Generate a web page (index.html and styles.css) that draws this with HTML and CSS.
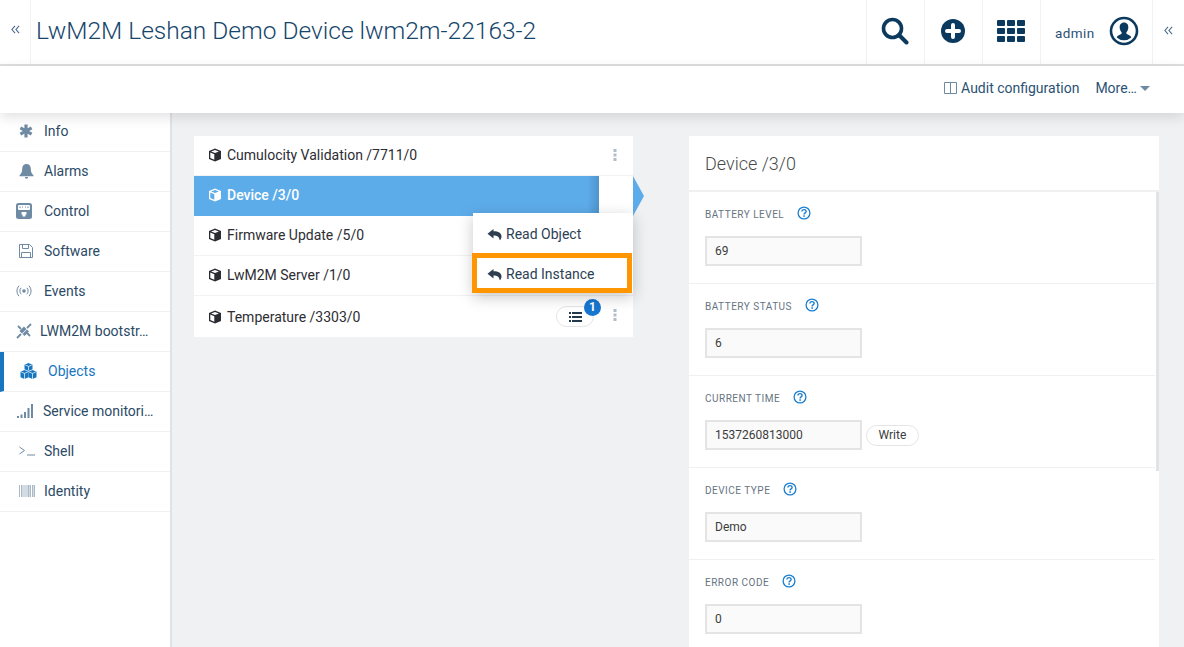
FILE: index.html
```html
<!DOCTYPE html>
<html lang="en">
<head>
    <meta charset="UTF-8">
    <title>LwM2M Leshan Demo Device</title>
    <link rel="stylesheet" href="styles.css">
</head>
<body>

<svg class="defs" width="0" height="0">
    <symbol id="cube" viewBox="0 0 14 14">
        <path d="M7 .6 13 3v8l-6 2.500L1 11V3z" fill="currentColor"/>
        <path d="M7 2 10.900 3.500 7 5.100 3.100 3.500z" fill="var(--cube-cut, #fff)"/>
        <path d="M2.300 4.600 6.300 6.300v5.500l-4-1.700z" fill="var(--cube-cut, #fff)"/>
    </symbol>
    <symbol id="reply" viewBox="0 0 15 13">
        <path d="M6.500 1 .5 5.800l6 4.700V7.400c3.500 0 5.600 1 6.300 4.800.9-.6 1.700-2 1.700-3.800 0-3.300-3-5.100-8-5.100z" fill="currentColor"/>
    </symbol>
    <symbol id="dots" viewBox="0 0 4 14">
        <rect x="0.500" y="1" width="3" height="3" fill="currentColor"/>
        <rect x="0.500" y="5.500" width="3" height="3" fill="currentColor"/>
        <rect x="0.500" y="10" width="3" height="3" fill="currentColor"/>
    </symbol>
    <symbol id="help" viewBox="0 0 14 14">
        <circle cx="7" cy="7" r="5.900" fill="none" stroke="currentColor" stroke-width="1.300"/>
        <path d="M4.900 5.500C5 4.200 5.900 3.600 7 3.600c1.200 0 2.100.7 2.100 1.800 0 1.500-2 1.500-2 3.100" fill="none" stroke="currentColor" stroke-width="1.400"/>
        <rect x="6.300" y="9.300" width="1.600" height="1.500" fill="currentColor"/>
    </symbol>
    <symbol id="chevrons" viewBox="0 0 10 10">
        <path d="M4.500 1 1 5l3.500 4M9 1 5.500 5 9 9" fill="none" stroke="currentColor" stroke-width="1.200"/>
    </symbol>
</svg>

<header class="topbar">
    <a class="toggle toggle-left"><svg class="chevrons"><use href="#chevrons"/></svg></a>
    <h1 class="title">LwM2M Leshan Demo Device lwm2m-22163-2</h1>
    <a class="top-btn">
        <svg width="28" height="28" viewBox="0 0 28 28"><circle cx="11.500" cy="11.500" r="9" fill="none" stroke="#0b3a5e" stroke-width="3.600"/><path d="m18 18 7.500 7.500" stroke="#0b3a5e" stroke-width="4" stroke-linecap="round"/></svg>
    </a>
    <a class="top-btn">
        <svg width="24" height="24" viewBox="0 0 24 24"><circle cx="12" cy="12" r="12" fill="#0b3a5e"/><path d="M12 6v12M6 12h12" stroke="#fff" stroke-width="4" stroke-linecap="round"/></svg>
    </a>
    <a class="top-btn">
        <svg width="28" height="22" viewBox="0 0 28 22" fill="#0b3a5e">
            <rect x="0" width="8" height="6" rx="1"/><rect x="10" width="8" height="6" rx="1"/><rect x="20" width="8" height="6" rx="1"/>
            <rect x="0" y="8" width="8" height="6" rx="1"/><rect x="10" y="8" width="8" height="6" rx="1"/><rect x="20" y="8" width="8" height="6" rx="1"/>
            <rect x="0" y="16" width="8" height="6" rx="1"/><rect x="10" y="16" width="8" height="6" rx="1"/><rect x="20" y="16" width="8" height="6" rx="1"/>
        </svg>
    </a>
    <a class="user">
        <span class="user-name">admin</span>
        <svg width="30" height="30" viewBox="0 0 30 30"><circle cx="15" cy="15" r="13" fill="none" stroke="#0b3a5e" stroke-width="2.600"/><path d="M15 6.500c-3 0-4.600 2.300-4.300 5.300.2 2 1 3.500 1.900 4.500v1.500c-1.500 1-4.300 1.500-4.900 3.700a11 11 0 0 0 14.600 0c-.6-2.200-3.400-2.700-4.900-3.700v-1.500c.9-1 1.700-2.500 1.900-4.500.3-3-1.300-5.300-4.300-5.300z" fill="#0b3a5e"/></svg>
    </a>
    <a class="toggle toggle-right"><svg class="chevrons"><use href="#chevrons"/></svg></a>
</header>

<div class="actionbar">
    <a class="action">
        <svg width="13" height="12" viewBox="0 0 13 12"><path d="M.5.500h12v11H.5zM6.500.5v11" fill="none" stroke="#6f8aa3"/></svg>
        Audit configuration
    </a>
    <a class="action action-more">More…<span class="caret"></span></a>
</div>

<div class="main">
    <nav class="sidebar">
        <a class="nav-item">
            <span class="nav-icon"><svg width="14" height="14" viewBox="0 0 14 14"><path d="M7 .5v13M1.400 3.800l11.200 6.400M12.600 3.800 1.400 10.200" stroke="#6f8aa3" stroke-width="3.200"/></svg></span>Info
        </a>
        <a class="nav-item">
            <span class="nav-icon"><svg width="15" height="16" viewBox="0 0 15 16"><path d="M7.500 1C10 1 11.800 3 11.800 5.800c0 3.500 1 4.800 2.700 6.700v.8H.5v-.8C2.200 10.600 3.200 9.300 3.200 5.800 3.200 3 5 1 7.500 1zM5.800 14h3.400a1.700 1.700 0 0 1-3.400 0z" fill="#6f8aa3"/></svg></span>Alarms
        </a>
        <a class="nav-item">
            <span class="nav-icon nav-icon-wide"><svg width="16" height="16" viewBox="0 0 16 16"><rect width="16" height="16" rx="2.500" fill="#6f8aa3"/><rect x="2" y="2" width="12" height="5" rx="1" fill="#fff"/><path d="M4 3.500v1.500M6.500 3.500v1M9.500 3.500v1M12 3.500v1.500" stroke="#6f8aa3"/><path d="M5.500 9h5v2.500H9.500v2h-3v-2h-1z" fill="#fff"/></svg></span>Control
        </a>
        <a class="nav-item">
            <span class="nav-icon"><svg width="14" height="14" viewBox="0 0 14 14"><path d="M.5.500h10l3 3v10H.5zM3.500.500v4h6v-4M2.500 13.500v-5h9v5" fill="none" stroke="#6f8aa3"/></svg></span>Software
        </a>
        <a class="nav-item">
            <span class="nav-icon nav-icon-wide"><svg width="16" height="12" viewBox="0 0 16 12"><circle cx="8" cy="6" r="1.800" fill="#6f8aa3"/><path d="M5.200 2.800a4.500 4.500 0 0 0 0 6.400M10.800 2.800a4.500 4.500 0 0 1 0 6.400M3 .8a7.500 7.500 0 0 0 0 10.400M13 .8a7.500 7.500 0 0 1 0 10.400" fill="none" stroke="#6f8aa3"/></svg></span>Events
        </a>
        <a class="nav-item nav-tight">
            <span class="nav-icon"><svg width="16" height="16" viewBox="0 0 16 16"><path d="M1 15 5 11M15 1l-4 4M2 3l3 3M11 10l3 3" stroke="#6f8aa3" stroke-width="1.800"/><path d="m3.500 8 4.500-4.500 2.500 2.500L6 10.500zM6.500 11 11 6.500l2 2L8.500 13z" fill="#6f8aa3"/></svg></span>LWM2M bootstr…
        </a>
        <a class="nav-item nav-active">
            <span class="nav-icon"><svg width="17" height="16" viewBox="0 0 17 16" fill="#1776bf"><path d="M8.500 0l4 1.700v4.600l-4 1.700-4-1.700V1.700z"/><path d="M4.500 7l4 1.700v5.600L4.500 16 .5 14.300V8.700z"/><path d="M12.500 7l4 1.700v5.600L12.500 16l-4-1.700V8.700z"/><path d="M5.200 2 8.500 3.400 11.800 2M8.500 3.400v4M1.200 9l3.300 1.400L7.800 9M4.500 10.400V16M9.200 9l3.300 1.400L15.800 9M12.500 10.400V16" fill="none" stroke="#fff" stroke-width=".7"/></svg></span>Objects
        </a>
        <a class="nav-item nav-tight nav-signal">
            <span class="nav-icon"><svg width="16" height="14" viewBox="0 0 16 14" fill="#6f8aa3"><rect x="0" y="12" width="2" height="2"/><rect x="3.500" y="10.500" width="2" height="3.500"/><rect x="7" y="8" width="2" height="6"/><rect x="10.500" y="4" width="2" height="10"/><rect x="14" y="0" width="2" height="14"/></svg></span>Service monitori…
        </a>
        <a class="nav-item">
            <span class="nav-icon"><svg width="16" height="10" viewBox="0 0 16 10"><path d="m.5 1 5 3.500-5 3.500M8 9h8" fill="none" stroke="#6f8aa3"/></svg></span>Shell
        </a>
        <a class="nav-item">
            <span class="nav-icon"><svg width="16" height="12" viewBox="0 0 16 12" fill="#a9b9c7"><rect x="0" width="1" height="12"/><rect x="2" width="1.500" height="12"/><rect x="4.500" width="1" height="12"/><rect x="6.500" width="1" height="12"/><rect x="8.500" width="2" height="12"/><rect x="11" width="1" height="12"/><rect x="13" width="1" height="12"/><rect x="14.500" width="1.500" height="12"/></svg></span>Identity
        </a>
    </nav>

    <section class="content">
        <div class="list-wrap">
            <ul class="instances">
                <li class="instance">
                    <svg class="cube"><use href="#cube"/></svg>
                    <span class="instance-name">Cumulocity Validation /7711/0</span>
                    <svg class="dots"><use href="#dots"/></svg>
                </li>
                <li class="instance instance-active">
                    <div class="instance-fill">
                        <svg class="cube"><use href="#cube"/></svg>
                        <span class="instance-name">Device /3/0</span>
                    </div>
                    <span class="instance-arrow"></span>
                </li>
                <li class="instance">
                    <svg class="cube"><use href="#cube"/></svg>
                    <span class="instance-name">Firmware Update /5/0</span>
                </li>
                <li class="instance">
                    <svg class="cube"><use href="#cube"/></svg>
                    <span class="instance-name">LwM2M Server /1/0</span>
                </li>
                <li class="instance">
                    <svg class="cube"><use href="#cube"/></svg>
                    <span class="instance-name">Temperature /3303/0</span>
                    <span class="ops-btn">
                        <svg width="13" height="10" viewBox="0 0 13 10" fill="#22374a"><rect x="0" y="0" width="2" height="2"/><rect x="3" y="0" width="10" height="2"/><rect x="0" y="4" width="2" height="2"/><rect x="3" y="4" width="10" height="2"/><rect x="0" y="8" width="2" height="2"/><rect x="3" y="8" width="10" height="2"/></svg>
                        <span class="ops-badge">1</span>
                    </span>
                    <svg class="dots"><use href="#dots"/></svg>
                </li>
            </ul>
            <div class="menu">
                <a class="menu-item"><svg class="reply"><use href="#reply"/></svg>Read Object</a>
                <a class="menu-item menu-marked"><svg class="reply"><use href="#reply"/></svg>Read Instance</a>
            </div>
        </div>

        <div class="panel">
            <h2 class="panel-title">Device /3/0</h2>
            <div class="fields">
                <div class="field">
                    <label class="field-label">Battery level <svg class="help"><use href="#help"/></svg></label>
                    <div class="field-row"><span class="field-value">69</span></div>
                </div>
                <div class="field">
                    <label class="field-label">Battery status <svg class="help"><use href="#help"/></svg></label>
                    <div class="field-row"><span class="field-value">6</span></div>
                </div>
                <div class="field">
                    <label class="field-label">Current time <svg class="help"><use href="#help"/></svg></label>
                    <div class="field-row"><span class="field-value">1537260813000</span><a class="write-btn">Write</a></div>
                </div>
                <div class="field">
                    <label class="field-label">Device type <svg class="help"><use href="#help"/></svg></label>
                    <div class="field-row"><span class="field-value">Demo</span></div>
                </div>
                <div class="field">
                    <label class="field-label">Error code <svg class="help"><use href="#help"/></svg></label>
                    <div class="field-row"><span class="field-value">0</span></div>
                </div>
                <span class="scroll-thumb"></span>
            </div>
        </div>
    </section>
</div>

</body>
</html>
```

FILE: styles.css
```css
* {
    box-sizing: border-box;
}

html, body {
    height: 100%;
}

body {
    margin: 0;
    padding: 0;
    height: 647px;
    overflow: hidden;
    display: flex;
    flex-direction: column;
    background: #fff;
    font-family: Roboto, "Liberation Sans", sans-serif;
    font-size: 14px;
    color: #2c4a66;
}

.defs {
    position: absolute;
}

/* top bar */
.topbar {
    display: flex;
    align-items: stretch;
    height: 66px;
    flex: none;
    border-bottom: 2px solid #dfdfdf;
    background: #fff;
}

.toggle {
    display: flex;
    align-items: center;
    justify-content: center;
    color: #47688a;
}

.toggle-left {
    width: 31px;
    padding-bottom: 5px;
    border-right: 1px solid #f2f2f2;
}

.toggle-right {
    width: 31px;
    padding-bottom: 4px;
}

.chevrons {
    width: 9px;
    height: 9px;
}

.title {
    flex: 1;
    margin: 0;
    padding-left: 5px;
    font-size: 24.500px;
    font-weight: 300;
    line-height: 62px;
    color: #15456b;
    white-space: nowrap;
}

.top-btn {
    width: 58px;
    display: flex;
    align-items: center;
    justify-content: center;
    border-left: 1px solid #f2f2f2;
    padding: 0 2px 3px 0;
}

.user {
    width: 113px;
    display: flex;
    align-items: center;
    gap: 14px;
    padding: 0 0 3px 14px;
    border-left: 1px solid #f2f2f2;
    border-right: 1px solid #f2f2f2;
}

.user-name {
    margin-top: 5px;
    font-size: 13.500px;
    letter-spacing: .4px;
    color: #2c5273;
}

/* second bar */
.actionbar {
    position: relative;
    z-index: 2;
    display: flex;
    justify-content: flex-end;
    align-items: center;
    gap: 16px;
    height: 47px;
    flex: none;
    padding: 0 34px 3px 0;
    background: #fff;
    box-shadow: 0 4px 12px rgba(0, 0, 0, 0.12);
}

.action {
    display: flex;
    align-items: center;
    gap: 4px;
    color: #2c5273;
    font-size: 14px;
}

.action-more {
    gap: 3px;
}

.caret {
    width: 0;
    height: 0;
    border: 5px solid transparent;
    border-top: 5px solid #6f8aa3;
    border-bottom: 0;
}

.main {
    flex: 1;
    display: flex;
    min-height: 0;
}

/* sidebar */
.sidebar {
    width: 172px;
    flex: none;
    background: #fff;
    border-right: 2px solid #e1e2e4;
}

.nav-item {
    display: flex;
    align-items: center;
    height: 40px;
    padding: 0 0 2px 16px;
    border-bottom: 1px solid #f0f0f0;
    color: #2c4a66;
    white-space: nowrap;
}

.nav-item:first-child {
    height: 39px;
}

.nav-icon {
    width: 28px;
    flex: none;
    display: flex;
    align-items: center;
    padding-left: 3px;
}

.nav-icon-wide {
    padding-left: 0;
}

.nav-tight .nav-icon {
    width: 24px;
    padding-left: 0;
}

.nav-signal .nav-icon {
    width: 27px;
    padding-left: 1px;
}

.nav-active {
    border-left: 4px solid #1776bf;
    padding-left: 15px;
    color: #1776bf;
}

.nav-active .nav-icon {
    width: 29px;
    padding-left: 1px;
}

/* content */
.content {
    flex: 1;
    display: flex;
    align-items: flex-start;
    gap: 56px;
    padding: 23px 25px 0 22px;
    background: #f0f1f3;
    min-width: 0;
}

.list-wrap {
    position: relative;
    width: 439px;
    flex: none;
}

.instances {
    list-style: none;
    margin: 0;
    padding: 0;
    background: #fff;
}

.instance {
    position: relative;
    display: flex;
    align-items: center;
    height: 40px;
    padding: 0 0 2px 15px;
    border-bottom: 1px solid #f2f2f2;
    color: #2d2d33;
}

.instance:last-child {
    height: 41px;
    padding-bottom: 0;
    border-bottom: 0;
}

.instance:last-child .dots {
    margin-bottom: 3px;
}

.cube {
    width: 14px;
    height: 14px;
    flex: none;
    margin: 0 5px 0 -1px;
    color: #2b2b33;
}

.instance-name {
    flex: 1;
}

.dots {
    width: 4px;
    height: 14px;
    margin-right: 16px;
    color: #b3bccd;
}

.instance-active {
    padding: 0;
    border-bottom: 0;
}

.instance-fill {
    width: 405px;
    height: 100%;
    display: flex;
    align-items: center;
    padding: 0 0 2px 15px;
    background: linear-gradient(90deg, #5dacea 97%, #4f94cc);
    color: #fff;
    font-weight: 500;
    --cube-cut: #5dacea;
}

.instance-fill .cube {
    color: #fff;
}

.instance-arrow {
    position: absolute;
    left: 439px;
    top: 0;
    width: 0;
    height: 0;
    border-top: 20px solid transparent;
    border-bottom: 20px solid transparent;
    border-left: 11px solid #5dacea;
}

.ops-btn {
    position: relative;
    display: flex;
    align-items: center;
    justify-content: center;
    width: 38px;
    height: 21px;
    margin-right: 19px;
    border: 1px solid #e4e4e4;
    border-radius: 11px;
}

.ops-badge {
    position: absolute;
    top: -8px;
    right: -8px;
    width: 17px;
    height: 17px;
    border-radius: 50%;
    background: #1776d0;
    color: #fff;
    font-size: 12px;
    font-weight: 700;
    line-height: 17px;
    text-align: center;
}

/* context menu */
.menu {
    position: absolute;
    left: 279px;
    top: 77px;
    width: 160px;
    height: 80px;
    background: #fff;
    box-shadow: 0 4px 14px rgba(0, 0, 0, 0.22);
}

.menu-item {
    display: flex;
    align-items: center;
    height: 40px;
    padding: 2px 0 0 14px;
    color: #2c3f55;
}

.reply {
    width: 15px;
    height: 13px;
    margin-right: 4px;
    color: #2f3e50;
}

.menu-marked {
    margin-left: -1px;
    width: 160px;
    padding: 2px 0 0 10px;
    border: 5px solid #ff9500;
}

/* right panel */
.panel {
    position: relative;
    width: 470px;
    flex: none;
    background: #fff;
}

.panel-title {
    margin: 0;
    height: 56px;
    padding-left: 16px;
    border-bottom: 2px solid #f0f0f0;
    font-size: 18px;
    font-weight: 300;
    line-height: 55px;
    color: #4a4a4a;
}

.fields {
    position: relative;
    padding-right: 4px;
}

.field {
    height: 92px;
    padding: 15px 0 0 16px;
    border-bottom: 1px solid #f0f0f0;
}

.field-label {
    display: flex;
    align-items: center;
    height: 14px;
    gap: 13px;
    font-size: 10px;
    font-weight: 400;
    letter-spacing: .5px;
    text-transform: uppercase;
    color: #66747f;
}

.help {
    width: 14px;
    height: 14px;
    margin-top: -3px;
    color: #1a7fd0;
}

.field-row {
    display: flex;
    align-items: center;
    gap: 4px;
    margin-top: 15px;
}

.field-value {
    width: 157px;
    height: 30px;
    padding-left: 8px;
    background: #fafafa;
    border: 2px solid #e4e4e4;
    font-size: 12px;
    line-height: 26px;
    color: #3c3c3c;
}

.write-btn {
    display: block;
    height: 21px;
    padding: 0 11.500px;
    border: 1px solid #e4e4e4;
    border-radius: 11px;
    font-size: 12px;
    line-height: 19px;
    color: #3c3c3c;
}

.scroll-thumb {
    position: absolute;
    right: 0;
    top: 0;
    width: 3px;
    height: 279px;
    background: #e2e3e5;
}
```
